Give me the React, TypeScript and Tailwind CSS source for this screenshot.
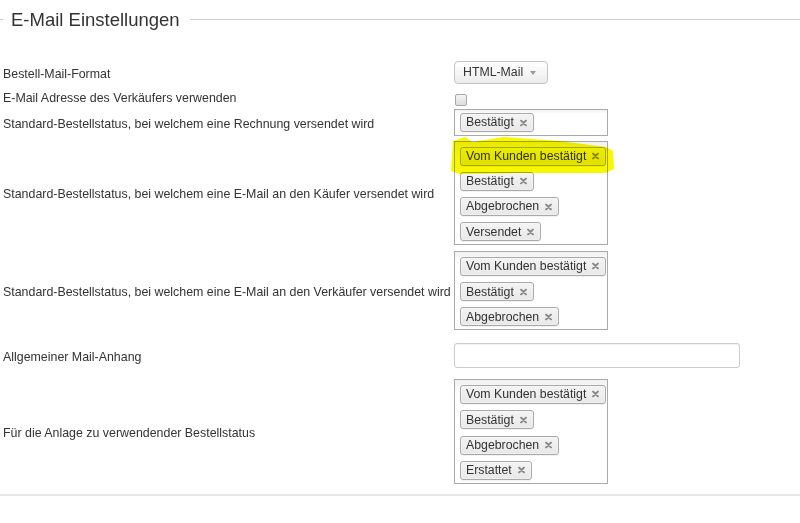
import React from "react";

const font = { fontFamily: '"Liberation Sans", Arial, sans-serif' };

function Tag({ label }: { label: string }) {
  return (
    <span className="relative flex h-[19px] items-center self-start rounded-[3px] border border-[#aaa] bg-gradient-to-b from-[#f4f4f4] to-[#e8e8e8] pl-[5px] pr-[19px] text-[12.3px] leading-none text-[#333] shadow-[0_0_2px_white_inset,0_1px_0_rgba(0,0,0,0.05)]">
      {label}
      <svg
        className="absolute right-[6px] top-1/2 -translate-y-1/2"
        width="7"
        height="7"
        viewBox="0 0 7 7"
        aria-hidden="true"
      >
        <path d="M1 1 L6 6 M6 1 L1 6" stroke="#8a8a8a" strokeWidth="1.8" strokeLinecap="round" />
      </svg>
    </span>
  );
}

function MultiSelect({
  tags,
  highlight,
  className = "pt-[4.5px] pb-[3px]",
}: {
  tags: string[];
  highlight?: boolean;
  className?: string;
}) {
  return (
    <div className="relative w-[154px]">
      <div
        className={`flex flex-col gap-[6.3px] border border-[#aaa] bg-white bg-gradient-to-b from-[#f2f2f2] from-[1%] to-white to-[15%] pl-[5px] ${className}`}
      >
        {tags.map((t) => (
          <Tag key={t} label={t} />
        ))}
      </div>
      {highlight && (
        // freehand marker highlight over the first tag
        <svg
          className="pointer-events-none absolute left-[-10px] top-[-10px] mix-blend-multiply"
          width="180"
          height="52"
          viewBox="0 0 180 52"
          aria-hidden="true"
        >
          <polygon
            points="9,10 21,6 28,11 60,6 116,10 162,16 169,20 170,38 161,42 76,42 16,43 7,40"
            fill="#f7f700"
          />
        </svg>
      )}
    </div>
  );
}

function Row({
  label,
  children,
  className = "",
}: {
  label: string;
  children: React.ReactNode;
  className?: string;
}) {
  return (
    <div className={`flex items-center ${className}`}>
      <div className="w-[451px] whitespace-nowrap pt-[2px] text-[12.4px] leading-[20px] text-[#333]">
        {label}
      </div>
      {children}
    </div>
  );
}

export default function App() {
  return (
    <div className="h-[523px] w-[800px] bg-white" style={font}>
      {/* Legend */}
      <div className="flex items-center pt-[9px]">
        <div className="w-[3px] border-t border-[#ccc]" />
        <h2 className="pl-[8px] pr-[10px] text-[18.5px] leading-[21px] text-[#333]">
          E-Mail Einstellungen
        </h2>
        <div className="flex-1 border-t border-[#ccc]" />
      </div>

      <div className="flex flex-col pl-[3px] pt-[31px]">
        <Row label="Bestell-Mail-Format" className="h-[23px]">
          <div className="flex h-[23px] w-[94px] items-center justify-between rounded-[4px] border border-[#c4c4c4] bg-gradient-to-b from-white to-[#ececec] pl-[8px] pr-[11px] text-[12.3px] text-[#333]">
            <span>HTML-Mail</span>
            <svg width="6" height="4" viewBox="0 0 6 4" aria-hidden="true">
              <path d="M0 0 H6 L3 4 Z" fill="#999" />
            </svg>
          </div>
        </Row>

        <Row label="E-Mail Adresse des Verkäufers verwenden" className="mt-[3px] h-[20px]">
          <div className="ml-[1px] mt-[5px] h-[12px] w-[12px] rounded-[2px] border border-[#a8a8a8] bg-gradient-to-b from-[#f4f4f4] to-[#dcdcdc]" />
        </Row>

        <Row
          label="Standard-Bestellstatus, bei welchem eine Rechnung versendet wird"
          className="mt-[2px]"
        >
          <MultiSelect tags={["Bestätigt"]} className="pt-[3px] pb-[3px]" />
        </Row>

        <Row
          label="Standard-Bestellstatus, bei welchem eine E-Mail an den Käufer versendet wird"
          className="mt-[5px]"
        >
          <MultiSelect
            highlight
            tags={["Vom Kunden bestätigt", "Bestätigt", "Abgebrochen", "Versendet"]}
          />
        </Row>

        <Row
          label="Standard-Bestellstatus, bei welchem eine E-Mail an den Verkäufer versendet wird"
          className="mt-[6px]"
        >
          <MultiSelect tags={["Vom Kunden bestätigt", "Bestätigt", "Abgebrochen"]} />
        </Row>

        <Row label="Allgemeiner Mail-Anhang" className="mt-[13px]">
          <input
            type="text"
            className="h-[25px] w-[286px] rounded-[3px] border border-[#ccc] bg-white shadow-[inset_0_1px_1px_rgba(0,0,0,0.06)] outline-none"
          />
        </Row>

        <Row label="Für die Anlage zu verwendender Bestellstatus" className="mt-[11px]">
          <MultiSelect tags={["Vom Kunden bestätigt", "Bestätigt", "Abgebrochen", "Erstattet"]} />
        </Row>
      </div>

      <div className="mt-[10px] h-[2px] bg-[#e6e6e6]" />
    </div>
  );
}
